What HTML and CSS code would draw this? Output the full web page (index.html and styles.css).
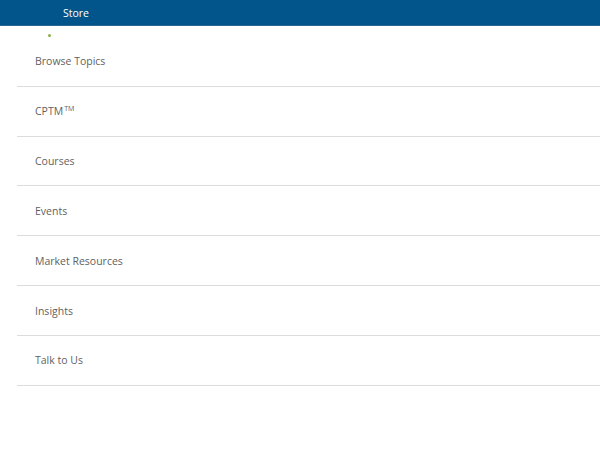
FILE: index.html
```html
<!DOCTYPE html>
<html lang="en">
<head>
    <meta charset="UTF-8">
    <meta name="viewport" content="width=device-width, initial-scale=1.0">
    <title>Menu</title>
    <link rel="stylesheet" href="styles.css">
</head>
<body>
    <div class="top-bar">
        <a class="top-link" href="#">Store</a>
    </div>
    <div class="dot-row"><span class="dot"></span></div>
    <ul class="nav-list">
        <li class="nav-item"><a href="#">Browse Topics</a></li>
        <li class="nav-item"><a href="#">CPTM<sup>TM</sup></a></li>
        <li class="nav-item"><a href="#">Courses</a></li>
        <li class="nav-item"><a href="#">Events</a></li>
        <li class="nav-item"><a href="#">Market Resources</a></li>
        <li class="nav-item"><a href="#">Insights</a></li>
        <li class="nav-item"><a href="#">Talk to Us</a></li>
    </ul>
</body>
</html>
```

FILE: styles.css
```css
body {
    font-family: "Open Sans", Lato, sans-serif;
    margin: 0;
    background-color: white;
}

.top-bar {
    height: 25px;
    background-color: #02558b;
    border-bottom: 1px solid #2a6a92;
    display: flex;
    align-items: center;
    padding-left: 63px;
}

.top-link {
    color: white;
    font-size: 10.5px;
    text-decoration: none;
}

.dot-row {
    height: 3px;
    padding: 8px 0 0 48px;
}

.dot {
    display: block;
    width: 3px;
    height: 3px;
    border-radius: 50%;
    background-color: #8bb04a;
}

.nav-list {
    list-style: none;
    margin: 0 0 0 17px;
    padding: 0;
}

.nav-item {
    height: 48.83px;
    border-bottom: 1px solid #dcdcdc;
    display: flex;
    align-items: center;
    padding-left: 18px;
}

.nav-item a {
    color: #5f5f5f;
    font-size: 10.5px;
    text-decoration: none;
}

.nav-item sup {
    font-size: 7px;
    vertical-align: 4px;
    margin-left: 1px;
}
```
